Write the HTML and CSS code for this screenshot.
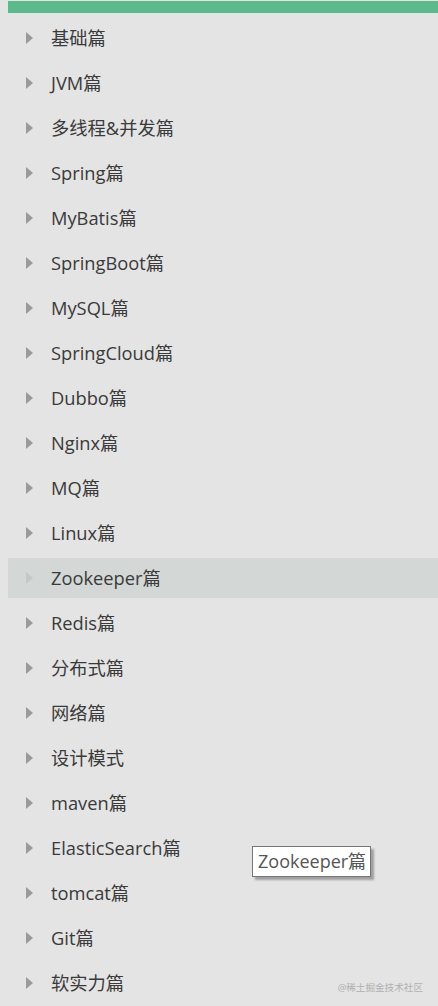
FILE: index.html
```html
<!DOCTYPE html>
<html lang="zh">
<head>
<meta charset="utf-8">
<link rel="stylesheet" href="styles.css">
</head>
<body>
<div class="panel">
  <div class="topbar"></div>
  <ul class="list">
    <li class="item"><span class="arrow"></span><span class="label">基础篇</span></li>
    <li class="item"><span class="arrow"></span><span class="label">JVM篇</span></li>
    <li class="item"><span class="arrow"></span><span class="label">多线程&amp;并发篇</span></li>
    <li class="item"><span class="arrow"></span><span class="label">Spring篇</span></li>
    <li class="item"><span class="arrow"></span><span class="label">MyBatis篇</span></li>
    <li class="item"><span class="arrow"></span><span class="label">SpringBoot篇</span></li>
    <li class="item"><span class="arrow"></span><span class="label">MySQL篇</span></li>
    <li class="item"><span class="arrow"></span><span class="label">SpringCloud篇</span></li>
    <li class="item"><span class="arrow"></span><span class="label">Dubbo篇</span></li>
    <li class="item"><span class="arrow"></span><span class="label">Nginx篇</span></li>
    <li class="item"><span class="arrow"></span><span class="label">MQ篇</span></li>
    <li class="item"><span class="arrow"></span><span class="label">Linux篇</span></li>
    <li class="item active"><span class="arrow"></span><span class="label">Zookeeper篇</span></li>
    <li class="item"><span class="arrow"></span><span class="label">Redis篇</span></li>
    <li class="item"><span class="arrow"></span><span class="label">分布式篇</span></li>
    <li class="item"><span class="arrow"></span><span class="label">网络篇</span></li>
    <li class="item"><span class="arrow"></span><span class="label">设计模式</span></li>
    <li class="item"><span class="arrow"></span><span class="label">maven篇</span></li>
    <li class="item"><span class="arrow"></span><span class="label">ElasticSearch篇</span></li>
    <li class="item"><span class="arrow"></span><span class="label">tomcat篇</span></li>
    <li class="item"><span class="arrow"></span><span class="label">Git篇</span></li>
    <li class="item"><span class="arrow"></span><span class="label">软实力篇</span></li>
  </ul>
  <div class="tooltip">Zookeeper篇</div>
  <div class="watermark">@稀土掘金技术社区</div>
</div>
</body>
</html>
```
FILE: styles.css
```css
html, body {
  margin: 0;
  padding: 0;
  background: #e4e4e4;
}
body {
  padding-top: 1px;
  font-family: "Open Sans", "Noto Sans CJK SC", sans-serif;
  color: #333;
}
.panel {
  position: relative;
  margin-left: 8px;
  height: 1005px;
  overflow: hidden;
}
.topbar {
  height: 12px;
  background: #5bb98b;
}
.list {
  list-style: none;
  margin: 5px 0 0 0;
  padding: 0;
  display: flex;
  flex-direction: column;
  gap: 5px;
}
.item {
  height: 40px;
  display: flex;
  align-items: center;
  padding-left: 18px;
}
.item.active {
  background: #d3d7d6;
}
.arrow {
  width: 0;
  height: 0;
  border-top: 6px solid transparent;
  border-bottom: 6px solid transparent;
  border-left: 7px solid #9a9a9a;
  margin-right: 18px;
}
.item.active .arrow {
  border-left-color: #c4c8c7;
}
.label {
  font-size: 18.3px;
  line-height: 24px;
  color: #3a3a3a;
}
.tooltip {
  position: absolute;
  left: 244px;
  top: 845px;
  height: 29px;
  padding: 0 4px 0 5px;
  background: #fff;
  border: 1px solid #767676;
  box-shadow: 3px 3px 2px rgba(0, 0, 0, 0.3);
  font-size: 18px;
  line-height: 29px;
  color: #555;
}
.watermark {
  position: absolute;
  right: 15px;
  top: 979px;
  font-size: 9.6px;
  color: #b0b0b0;
}
```
